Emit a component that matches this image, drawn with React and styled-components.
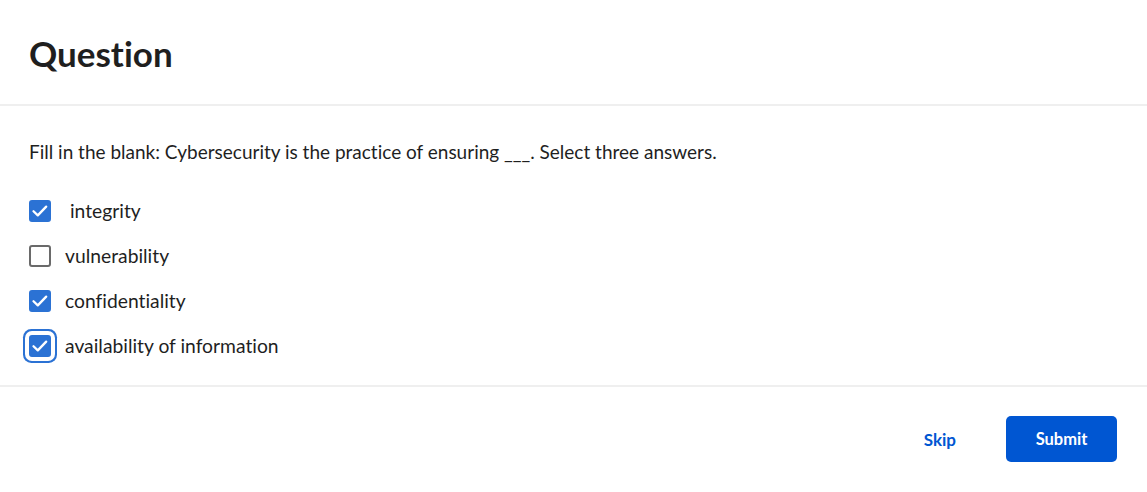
import styled, { createGlobalStyle } from "styled-components";

const GlobalStyle = createGlobalStyle`
  body {
    margin: 0;
    background: #fff;
    font-family: "Lato", "Liberation Sans", sans-serif;
    font-variant-ligatures: none;
    color: #1f1f1f;
  }
`;

const Page = styled.div`
  display: flex;
  flex-direction: column;
  width: 100%;
  height: 492px;
`;

const Header = styled.header`
  display: flex;
  align-items: center;
  height: 104px;
  padding: 0 29px;
  border-bottom: 2px solid #efefef;
`;

const Title = styled.h1`
  margin: 0;
  padding-top: 2px;
  font-size: 35px;
  font-weight: 700;
  color: #1f1f1f;
`;

const Body = styled.section`
  display: flex;
  flex-direction: column;
  padding: 34px 29px 17px;
  border-bottom: 2px solid #efefef;
`;

const Prompt = styled.p`
  margin: 0 0 24px;
  font-size: 19px;
  line-height: 24px;
`;

const OptionList = styled.div`
  display: flex;
  flex-direction: column;
`;

const Option = styled.label`
  display: flex;
  align-items: center;
  gap: 14px;
  height: 45px;
  font-size: 19.3px;
  cursor: pointer;
`;

const Box = styled.span`
  display: flex;
  align-items: center;
  justify-content: center;
  flex-shrink: 0;
  box-sizing: border-box;
  width: 22px;
  height: 22px;
  border-radius: 3px;
  background: ${(p) => (p.$checked ? "#2b72d4" : "#fff")};
  border: 2px solid ${(p) => (p.$checked ? "#2b72d4" : "#6a6a6a")};
  box-shadow: ${(p) =>
    p.$focused ? "0 0 0 4px #fff, 0 0 0 6px #2b72d4" : "none"};
`;

const Footer = styled.footer`
  display: flex;
  justify-content: flex-end;
  align-items: flex-start;
  gap: 26px;
  padding: 29px 30px 0;
`;

const SkipButton = styled.button`
  height: 46px;
  padding: 0 24px;
  border: none;
  background: transparent;
  color: #0056d2;
  font-family: inherit;
  font-size: 17px;
  font-weight: 700;
  cursor: pointer;
`;

const SubmitButton = styled.button`
  width: 111px;
  height: 46px;
  border: none;
  border-radius: 5px;
  background: #0056d2;
  color: #fff;
  font-family: inherit;
  font-size: 16.5px;
  font-weight: 700;
  cursor: pointer;
`;

function Check() {
  return (
    <svg width="18" height="18" viewBox="0 0 18 18" fill="none">
      <path
        d="M2.5 9.2 L6.8 13.4 L15.2 4.6"
        stroke="#fff"
        strokeWidth="2.3"
        strokeLinecap="round"
        strokeLinejoin="round"
      />
    </svg>
  );
}

const options = [
  { text: "\u00a0integrity", checked: true },
  { text: "vulnerability", checked: false },
  { text: "confidentiality", checked: true },
  { text: "availability of information", checked: true, focused: true },
];

export default function App() {
  return (
    <>
      <GlobalStyle />
      <Page>
        <Header>
          <Title>Question</Title>
        </Header>
        <Body>
          <Prompt>
            Fill in the blank: Cybersecurity is the practice of ensuring ___.
            Select three answers.
          </Prompt>
          <OptionList>
            {options.map((o) => (
              <Option key={o.text}>
                <Box $checked={o.checked} $focused={o.focused}>
                  {o.checked && <Check />}
                </Box>
                {o.text}
              </Option>
            ))}
          </OptionList>
        </Body>
        <Footer>
          <SkipButton>Skip</SkipButton>
          <SubmitButton>Submit</SubmitButton>
        </Footer>
      </Page>
    </>
  );
}
